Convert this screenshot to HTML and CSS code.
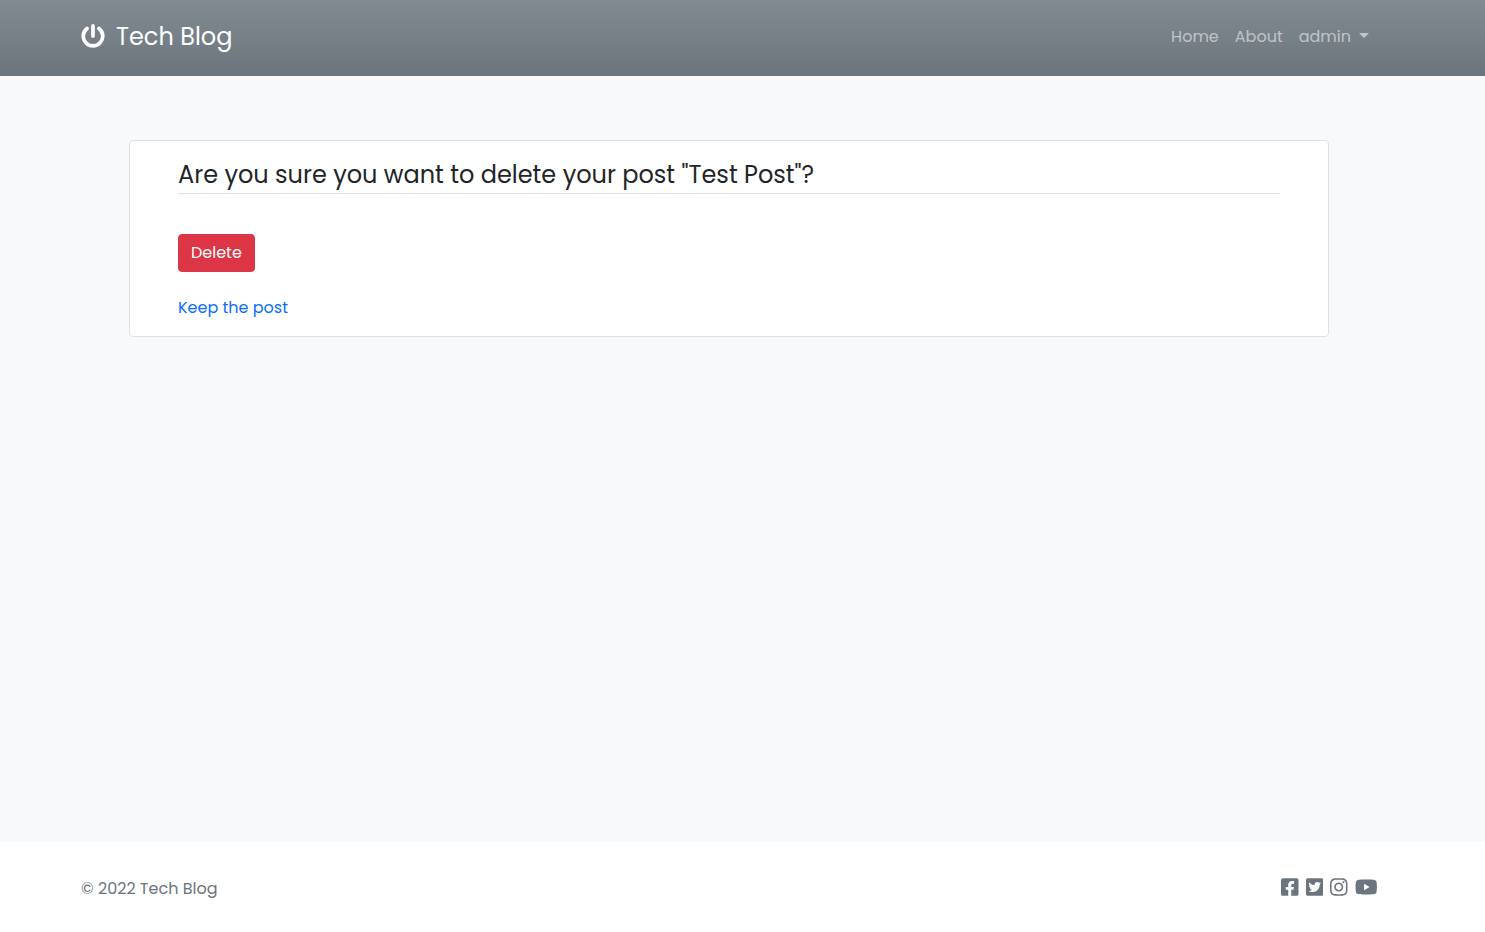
FILE: index.html
```html
<!DOCTYPE html>
<html lang="en">
<head>
<meta charset="utf-8">
<meta name="viewport" content="width=device-width, initial-scale=1">
<title>Tech Blog</title>
<link rel="stylesheet" href="styles.css">
</head>
<body>
<header class="site-header">
  <div class="container">
    <a class="brand" href="#">
      <svg class="brand-icon" viewBox="0 0 512 512" aria-hidden="true"><path fill="none" stroke="currentColor" stroke-width="80" stroke-linecap="round" d="M256 40V256M128 96A208 208 0 1 0 384 96"/></svg>
      <span>Tech Blog</span>
    </a>
    <nav class="nav">
      <a class="nav-link" href="#">Home</a>
      <a class="nav-link" href="#">About</a>
      <button class="nav-link nav-toggle" type="button" aria-haspopup="true">admin<span class="caret"></span></button>
    </nav>
  </div>
</header>
<main class="main">
  <form class="card">
    <h1 class="card-title">Are you sure you want to delete your post "Test Post"?</h1>
    <button class="btn-danger" type="submit">Delete</button>
    <a class="keep-link" href="#">Keep the post</a>
  </form>
</main>
<footer class="site-footer">
  <div class="container container-top">
    <p class="copyright">© 2022 Tech Blog</p>
    <div class="social">
      <a href="#" aria-label="Facebook"><svg viewBox="0 0 448 512"><path fill="currentColor" d="M400 32H48A48 48 0 0 0 0 80v352a48 48 0 0 0 48 48h137.250V327.690h-63V256h63v-54.640c0-62.150 37-96.480 93.670-96.480 27.140 0 55.520 4.840 55.520 4.840v61h-31.270c-30.810 0-40.420 19.120-40.420 38.730V256h68.780l-11 71.690h-57.780V480H400a48 48 0 0 0 48-48V80a48 48 0 0 0-48-48z"/></svg></a>
      <a href="#" aria-label="Twitter"><svg viewBox="0 0 448 512"><path fill="currentColor" d="M400 32H48C21.500 32 0 53.500 0 80v352c0 26.500 21.500 48 48 48h352c26.500 0 48-21.500 48-48V80c0-26.500-21.500-48-48-48zm-48.900 158.800c.2 2.800.2 5.700.2 8.500 0 86.700-66 186.600-186.600 186.600-37.200 0-71.700-10.800-100.700-29.400 5.300.6 10.400.8 15.800.8 30.700 0 58.900-10.400 81.400-28-28.800-.6-53-19.500-61.300-45.500 10.100 1.500 19.200 1.500 29.600-1.200-30-6.100-52.500-32.500-52.500-64.400v-.8c8.700 4.900 18.900 7.900 29.600 8.300a65.447 65.447 0 0 1-29.200-54.600c0-12.200 3.200-23.400 8.900-33.100 32.300 39.800 80.800 65.800 135.200 68.600-9.300-44.500 24-80.600 64-80.600 18.900 0 35.900 7.900 47.900 20.700 14.800-2.800 29-8.300 41.600-15.800-4.900 15.200-15.200 28-28.800 36.100 13.200-1.400 26-5.100 37.800-10.200-8.900 13.100-20.100 24.700-32.900 34z"/></svg></a>
      <a href="#" aria-label="Instagram"><svg viewBox="0 0 448 512"><path fill="currentColor" d="M224.100 141c-63.600 0-114.900 51.300-114.900 114.900s51.300 114.900 114.900 114.900S339 319.500 339 255.900 287.700 141 224.100 141zm0 189.600c-41.100 0-74.700-33.500-74.700-74.700s33.500-74.700 74.700-74.700 74.700 33.500 74.700 74.700-33.600 74.700-74.700 74.700zm146.400-194.300c0 14.900-12 26.800-26.800 26.800-14.900 0-26.800-12-26.800-26.800s12-26.800 26.800-26.800 26.800 12 26.800 26.800zm76.100 27.200c-1.700-35.900-9.900-67.700-36.200-93.900-26.200-26.200-58-34.400-93.900-36.200-37-2.100-147.900-2.100-184.900 0-35.800 1.700-67.600 9.900-93.900 36.100s-34.400 58-36.200 93.900c-2.100 37-2.100 147.900 0 184.900 1.700 35.900 9.900 67.700 36.200 93.900s58 34.400 93.900 36.200c37 2.100 147.900 2.100 184.900 0 35.900-1.700 67.700-9.900 93.900-36.200 26.200-26.200 34.400-58 36.200-93.900 2.100-37 2.100-147.800 0-184.800zM398.800 388c-7.800 19.600-22.900 34.700-42.600 42.600-29.500 11.700-99.500 9-132.100 9s-102.700 2.600-132.100-9c-19.600-7.800-34.700-22.900-42.600-42.600-11.700-29.500-9-99.500-9-132.100s-2.600-102.700 9-132.100c7.800-19.600 22.900-34.700 42.600-42.600 29.500-11.700 99.500-9 132.100-9s102.700-2.600 132.100 9c19.600 7.800 34.700 22.900 42.600 42.600 11.700 29.500 9 99.500 9 132.100s2.700 102.700-9 132.100z"/></svg></a>
      <a href="#" aria-label="YouTube"><svg viewBox="0 0 576 512"><path fill="currentColor" d="M549.655 124.083c-6.281-23.650-24.787-42.276-48.284-48.597C458.781 64 288 64 288 64S117.220 64 74.629 75.486c-23.497 6.322-42.003 24.947-48.284 48.597-11.412 42.867-11.412 132.305-11.412 132.305s0 89.438 11.412 132.305c6.281 23.650 24.787 41.500 48.284 47.821C117.220 448 288 448 288 448s170.780 0 213.371-11.486c23.497-6.321 42.003-24.171 48.284-47.821 11.412-42.867 11.412-132.305 11.412-132.305s0-89.438-11.412-132.305zm-317.510 213.508V175.185l142.739 81.205-142.739 81.201z"/></svg></a>
    </div>
  </div>
</footer>
</body>
</html>
```
FILE: styles.css
```css
* {
  box-sizing: border-box;
}

body {
  margin: 0;
  min-height: 100vh;
  display: flex;
  flex-direction: column;
  background: #f8f9fa;
  color: #212529;
  font-family: Poppins, Inter, "Open Sans", sans-serif;
  font-size: 16px;
  font-weight: 400;
  line-height: 24px;
}

a {
  text-decoration: none;
}

.site-header,
.main,
.site-footer {
  padding-left: 0;
  padding-right: 27px;
}

.container {
  max-width: 1296px;
  margin: 0 auto;
  display: flex;
  align-items: center;
  justify-content: space-between;
}

.container-top {
  align-items: flex-start;
}

.site-header {
  padding-top: 17px;
  padding-bottom: 19px;
  background: #6c757d linear-gradient(180deg, #828a91, #6c757d);
}

.brand {
  display: flex;
  align-items: center;
  gap: 11px;
  color: #fff;
  font-size: 24px;
  line-height: 40px;
}

.brand-icon {
  width: 24px;
  height: 24px;
  margin-bottom: 2px;
}

.nav {
  display: flex;
}

.nav-link {
  padding: 8px;
  border: 0;
  background: none;
  color: rgba(255, 255, 255, 0.55);
  font: inherit;
}

.nav-toggle {
  display: flex;
  align-items: center;
  gap: 8px;
}

.caret {
  margin-bottom: 4px;
  border: 5px solid transparent;
  border-top-color: currentColor;
  border-bottom: 0;
}

.main {
  flex: 1;
  padding-top: 64px;
}

.card {
  max-width: 1200px;
  margin: 0 auto;
  padding: 16px 48px;
  display: flex;
  flex-direction: column;
  align-items: flex-start;
  background: #fff;
  border: 1px solid #dee2e6;
  border-radius: 4px;
}

.card-title {
  align-self: stretch;
  margin: 0 0 40px;
  padding-bottom: 1px;
  border-bottom: 1px solid #dee2e6;
  font-size: 24px;
  font-weight: 400;
  line-height: 35px;
}

.btn-danger {
  padding: 6px 12px;
  border: 1px solid #dc3545;
  border-radius: 4px;
  background: #dc3545;
  color: #fff;
  font: inherit;
}

.keep-link {
  margin-top: 24px;
  color: #0d6efd;
}

.site-footer {
  padding-top: 35px;
  padding-bottom: 31px;
  background: #fff;
  color: #6c757d;
}

.copyright {
  margin: 0;
}

.social {
  display: flex;
  gap: 7px;
}

.social a {
  display: flex;
  color: inherit;
}

.social svg {
  height: 20px;
}
```
